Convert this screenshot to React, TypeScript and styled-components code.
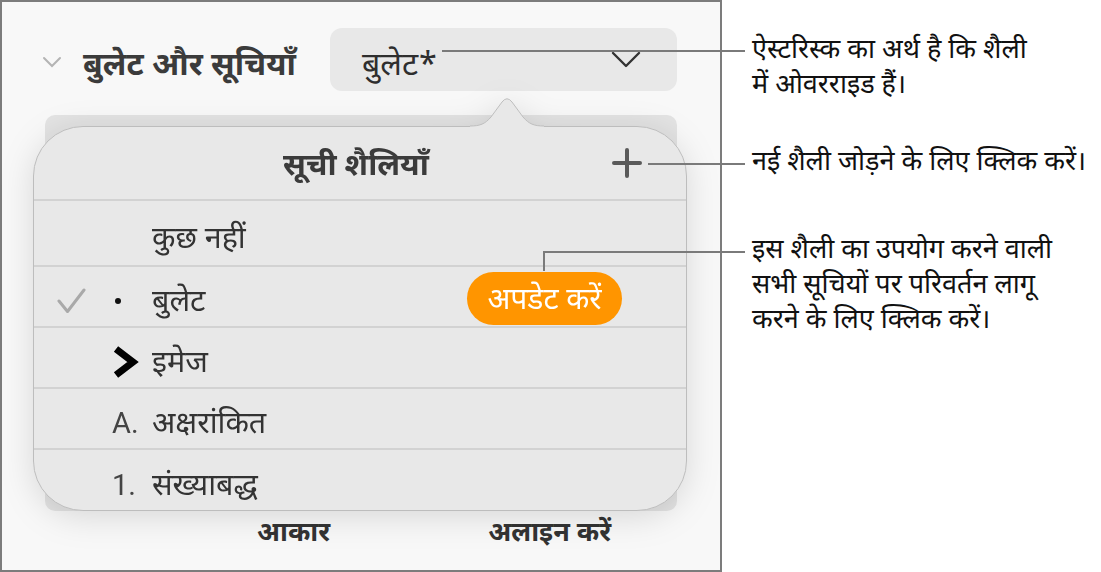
import React from 'react';
import styled, { createGlobalStyle } from 'styled-components';

const GlobalStyle = createGlobalStyle`
  html, body {
    margin: 0;
    padding: 0;
    background: #FFF;
  }

  body {
    font-family: "Noto Sans Devanagari", "Lohit Devanagari", "Noto Sans", Roboto, sans-serif;
    -webkit-font-smoothing: antialiased;
  }
`;

type ListStyle = {
  label: string;
  marker: 'none' | 'dot' | 'image' | 'letter' | 'number';
  checked?: boolean;
  updatable?: boolean;
};

const listStyles: ListStyle[] = [
  { label: 'कुछ नहीं', marker: 'none' },
  { label: 'बुलेट', marker: 'dot', checked: true, updatable: true },
  { label: 'इमेज', marker: 'image' },
  { label: 'अक्षरांकित', marker: 'letter' },
  { label: 'संख्याबद्ध', marker: 'number' },
];

const Marker: React.FC<{ kind: ListStyle['marker'] }> = ({ kind }) => {
  switch (kind) {
    case 'dot':
      return <Dot />;
    case 'image':
      return (
        <svg width="28" height="34" viewBox="0 0 28 34">
          <path d="M4 4 L21 17 L4 30" fill="none" stroke="#000" strokeWidth="7" strokeLinejoin="miter" />
        </svg>
      );
    case 'letter':
      return <MarkerText>A.</MarkerText>;
    case 'number':
      return <MarkerText>1.</MarkerText>;
    default:
      return null;
  }
};

export default function App() {
  return (
    <Page>
      <GlobalStyle />

      <Panel>
        <HeaderRow>
          <Disclosure width="20" height="12" viewBox="0 0 20 12">
            <path d="M2 2 L10 10 L18 2" fill="none" stroke="#B4B4B4" strokeWidth="2" strokeLinecap="round" />
          </Disclosure>
          <SectionTitle>बुलेट और सूचियाँ</SectionTitle>

          <SelectButton>
            <SelectValue>बुलेट*</SelectValue>
            <svg width="30" height="18" viewBox="0 0 30 18">
              <path d="M2 2 L15 15 L28 2" fill="none" stroke="#333" strokeWidth="2.4" strokeLinecap="round" strokeLinejoin="round" />
            </svg>
          </SelectButton>
        </HeaderRow>

        <Stage>
          <BackCard />

          <Popover>
            <Arrow width="74" height="31" viewBox="0 0 74 31">
              <path
                d="M0 30 C 10 30 15 28 21 21 L 32 6 Q 37 -0.5 42 6 L 53 21 C 59 28 64 30 74 30 L 74 31 L 0 31 Z"
                fill="#E8E8E8"
              />
              <path
                d="M0 30 C 10 30 15 28 21 21 L 32 6 Q 37 -0.5 42 6 L 53 21 C 59 28 64 30 74 30"
                fill="none"
                stroke="#BDBDBD"
                strokeWidth="1"
              />
            </Arrow>

            <PopoverBody>
              <PopoverHeader>
                <PopoverTitle>सूची शैलियाँ</PopoverTitle>
                <PlusButton>
                  <svg width="32" height="30" viewBox="0 0 32 30">
                    <path d="M3 15 H29 M16 2 V28" stroke="#5A5A5A" strokeWidth="4" strokeLinecap="round" />
                  </svg>
                </PlusButton>
              </PopoverHeader>

              {listStyles.map((style, index) => (
                <StyleRow key={style.label} $tall={index === 0}>
                  <CheckCell>
                    {style.checked && (
                      <svg width="30" height="28" viewBox="0 0 30 28">
                        <path d="M2 14 L10.5 24.5 L27 3" fill="none" stroke="#A9A9A9" strokeWidth="3" strokeLinecap="round" strokeLinejoin="round" />
                      </svg>
                    )}
                  </CheckCell>
                  <MarkerCell>
                    <Marker kind={style.marker} />
                  </MarkerCell>
                  <StyleLabel>{style.label}</StyleLabel>
                  {style.updatable && <UpdateButton>अपडेट करें</UpdateButton>}
                </StyleRow>
              ))}
            </PopoverBody>
          </Popover>
        </Stage>

        <TabLabels>
          <TabLabel>आकार</TabLabel>
          <TabLabel>अलाइन करें</TabLabel>
        </TabLabels>
      </Panel>

      <Notes>
        <Note $top={34}>
          ऐस्टरिस्क का अर्थ है कि शैली
          <br />
          में ओवरराइड हैं।
        </Note>
        <Note $top={42}>नई शैली जोड़ने के लिए क्लिक करें।</Note>
        <Note $top={53}>
          इस शैली का उपयोग करने वाली
          <br />
          सभी सूचियों पर परिवर्तन लागू
          <br />
          करने के लिए क्लिक करें।
        </Note>
      </Notes>

      <LeaderLine style={{ left: 442, top: 50, width: 303 }} />
      <LeaderLine style={{ left: 648, top: 163, width: 97 }} />
      <LeaderLine style={{ left: 544, top: 251, width: 201 }} />
      <LeaderStem style={{ left: 543, top: 251, height: 20 }} />
    </Page>
  );
}

const Page = styled.div`
  position: relative;
  display: flex;
  width: 1101px;
  height: 572px;
  overflow: hidden;
`;

const Panel = styled.div`
  box-sizing: border-box;
  width: 722px;
  height: 572px;
  flex-shrink: 0;
  display: flex;
  flex-direction: column;
  border: 2px solid #7C7C7C;
  background: #F8F8F8;
`;

const HeaderRow = styled.div`
  display: flex;
  align-items: center;
  height: 63px;
  margin-top: 26px;
  padding-left: 40px;
  gap: 21px;
`;

const Disclosure = styled.svg`
  margin-top: 4px;
`;

const SectionTitle = styled.div`
  font-size: 32px;
  line-height: 40px;
  padding-top: 14px;
  font-weight: 700;
  color: #3B3B3B;
  width: 226px;
  white-space: nowrap;
`;

const SelectButton = styled.div`
  box-sizing: border-box;
  width: 347px;
  height: 63px;
  display: flex;
  align-items: center;
  justify-content: space-between;
  padding: 0 36px 0 32px;
  border-radius: 12px;
  background: #E8E8E8;
  color: #2E2E2E;
`;

const SelectValue = styled.span`
  font-size: 32px;
  line-height: 40px;
  padding-top: 14px;
`;

const Stage = styled.div`
  position: relative;
  margin-top: 24px;
  padding-left: 43px;
`;

const BackCard = styled.div`
  width: 632px;
  height: 396px;
  border-radius: 10px;
  background: #E3E3E3;
`;

const Popover = styled.div`
  position: absolute;
  left: 31px;
  top: 11px;
  width: 654px;
  filter: drop-shadow(0 6px 16px rgba(0, 0, 0, 0.13));
`;

const Arrow = styled.svg`
  position: absolute;
  left: 437px;
  top: -30px;
  z-index: 1;
`;

const PopoverBody = styled.div`
  box-sizing: border-box;
  width: 654px;
  height: 385px;
  display: flex;
  flex-direction: column;
  border: 1px solid #BDBDBD;
  border-radius: 50px;
  background: #E8E8E8;
  overflow: hidden;
`;

const PopoverHeader = styled.div`
  position: relative;
  flex-shrink: 0;
  height: 72px;
  display: flex;
  align-items: center;
  justify-content: center;
  border-bottom: 2px solid #D2D2D2;
`;

const PopoverTitle = styled.div`
  font-size: 31px;
  line-height: 40px;
  padding-top: 10px;
  font-weight: 700;
  color: #3B3B3B;
  margin-right: 8px;
`;

const PlusButton = styled.div`
  position: absolute;
  right: 43px;
  top: 21px;
  display: flex;
`;

const StyleRow = styled.div<{ $tall?: boolean }>`
  box-sizing: border-box;
  flex-shrink: 0;
  height: ${(p) => (p.$tall ? 66 : 61)}px;
  display: flex;
  align-items: center;
  padding: 9px 0 0 23px;
  border-bottom: 2px solid #D2D2D2;

  &:last-child {
    border-bottom: none;
  }
`;

const CheckCell = styled.div`
  width: 55px;
  display: flex;
  align-items: center;
`;

const MarkerCell = styled.div`
  width: 40px;
  display: flex;
  align-items: center;
`;

const Dot = styled.span`
  width: 6px;
  height: 6px;
  margin-left: 3px;
  border-radius: 50%;
  background: #111;
`;

const MarkerText = styled.span`
  font-family: Roboto, "Liberation Sans", sans-serif;
  font-size: 29px;
  color: #444;
`;

const StyleLabel = styled.div`
  flex: 1;
  font-size: 30.5px;
  line-height: 40px;
  padding-top: 6px;
  color: #333;
`;

const UpdateButton = styled.div`
  box-sizing: border-box;
  height: 53px;
  width: 155px;
  margin: -5px 64px 0 0;
  padding-top: 6px;
  display: flex;
  align-items: center;
  justify-content: center;
  border-radius: 27px;
  background: #FF9500;
  font-size: 30px;
  line-height: 40px;
  color: #FFF;
`;

const TabLabels = styled.div`
  display: flex;
  margin-top: 2px;
  padding: 2px 0 0 255px;
  gap: 158px;
`;

const TabLabel = styled.div`
  font-size: 27px;
  line-height: 40px;
  font-weight: 700;
  color: #333;
`;

const Notes = styled.div`
  display: flex;
  flex-direction: column;
  padding-left: 30px;
`;

const Note = styled.div<{ $top: number }>`
  margin-top: ${(p) => p.$top}px;
  font-size: 27px;
  line-height: 35px;
  color: #111;
  white-space: nowrap;
`;

const LeaderLine = styled.div`
  position: absolute;
  height: 2px;
  background: #7A7A7A;
`;

const LeaderStem = styled.div`
  position: absolute;
  width: 2px;
  background: #7A7A7A;
`;
